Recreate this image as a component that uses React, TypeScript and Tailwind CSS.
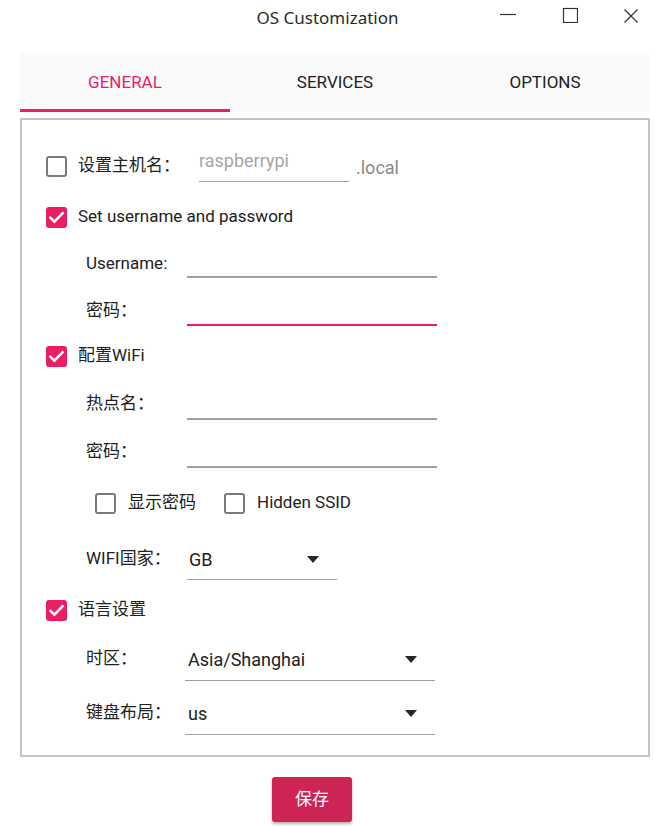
import React from 'react';

function Check({ checked }: { checked: boolean }) {
    if (checked) {
        return (
            <div className="w-[21px] h-[21px] rounded-[3px] bg-[#e91e63] flex items-center justify-center shrink-0">
                <svg width="17" height="17" viewBox="0 0 24 24">
                    <path d="M3.5 12.5l5.5 5.5L20.5 6" fill="none" stroke="white" strokeWidth="3.6" strokeLinecap="square" />
                </svg>
            </div>
        );
    }
    return <div className="w-[21px] h-[21px] rounded-[3px] border-2 border-[#7a7a7a] shrink-0" />;
}

function Arrow() {
    return (
        <svg width="12" height="7" viewBox="0 0 12 7" className="shrink-0">
            <path d="M0 0h12L6 7z" fill="#262626" />
        </svg>
    );
}

function Row({ top, children, className = '' }: { top: number; children: React.ReactNode; className?: string }) {
    return (
        <div className={`flex items-center h-[40px] ${className}`} style={{ marginTop: top }}>
            {children}
        </div>
    );
}

function Field({ h, focused = false }: { h: string; focused?: boolean }) {
    return (
        <div
            className={`self-start ${h} w-[250px] ${focused ? 'border-b-2 border-[#e91e63]' : 'border-b-2 border-[#a0a0a0]'}`}
        />
    );
}

export default function App() {
    return (
        <div
            className="w-[655px] h-[826px] bg-white relative overflow-hidden text-[#212121]"
            style={{ fontFamily: 'Roboto, "Noto Sans CJK SC", sans-serif' }}
        >
            {/* title bar */}
            <div className="h-[35px] flex items-center justify-center relative">
                <div className="text-[17px] text-[#2a2a2a]" style={{ fontFamily: '"Noto Sans", "Noto Sans CJK SC", sans-serif' }}>
                    OS Customization
                </div>
                <svg width="18" height="16" viewBox="0 0 18 16" className="absolute left-[499px] top-[7px]">
                    <path d="M1 7.5h16" stroke="#333" strokeWidth="1.2" />
                </svg>
                <svg width="16" height="16" viewBox="0 0 16 16" className="absolute left-[562px] top-[7px]">
                    <rect x="1.5" y="1.5" width="14" height="14" fill="none" stroke="#333" strokeWidth="1.2" />
                </svg>
                <svg width="16" height="16" viewBox="0 0 16 16" className="absolute left-[623px] top-[8px]">
                    <path d="M1.5 1.5l13 13M14.5 1.5l-13 13" stroke="#333" strokeWidth="1.2" />
                </svg>
            </div>

            {/* tabs */}
            <div className="ml-[20px] mr-[5px] mt-[18px] h-[59px] bg-[#fafafa] flex text-[17px]">
                <div className="flex-1 flex flex-col">
                    <div className="flex-1 flex items-center justify-center text-[#e91e63] pt-[4px]">GENERAL</div>
                    <div className="h-[3px] bg-[#e91e63]" />
                </div>
                <div className="flex-1 flex items-center justify-center pt-[4px] pb-[3px]">SERVICES</div>
                <div className="flex-1 flex items-center justify-center pt-[4px] pb-[3px]">OPTIONS</div>
            </div>

            {/* panel */}
            <div className="ml-[20px] mr-[5px] mt-[6px] h-[639px] border-2 border-[#c4c4c4] pl-[24px] text-[17px]">
                <Row top={26}>
                    <Check checked={false} />
                    <span className="ml-[11px] w-[121px]">设置主机名：</span>
                    <div className="self-start h-[36px] w-[150px] border-b-[1.5px] border-[#a0a0a0] flex items-center pb-[6px]">
                        <span className="text-[#a6a6a6] text-[18px]">raspberrypi</span>
                    </div>
                    <span className="ml-[7px] text-[#8a8a8a] text-[18px] mt-[2px]">.local</span>
                </Row>
                <Row top={11}>
                    <Check checked />
                    <span className="ml-[11px]">Set username and password</span>
                </Row>
                <Row top={7} className="pl-[40px]">
                    <span className="w-[101px]">Username:</span>
                    <Field h="h-[34px]" />
                </Row>
                <Row top={7} className="pl-[40px]">
                    <span className="w-[101px]">密码：</span>
                    <Field h="h-[35px]" focused />
                </Row>
                <Row top={5}>
                    <Check checked />
                    <span className="ml-[11px]">配置WiFi</span>
                </Row>
                <Row top={8} className="pl-[40px]">
                    <span className="w-[101px]">热点名：</span>
                    <Field h="h-[36px]" />
                </Row>
                <Row top={8} className="pl-[40px]">
                    <span className="w-[101px]">密码：</span>
                    <Field h="h-[36px]" />
                </Row>
                <Row top={11} className="pl-[49px]">
                    <Check checked={false} />
                    <span className="ml-[12px] w-[96px]">显示密码</span>
                    <Check checked={false} />
                    <span className="ml-[12px]">Hidden SSID</span>
                </Row>
                <Row top={16} className="pl-[40px]">
                    <span className="w-[101px]">WIFI国家：</span>
                    <div className="self-start h-[41px] w-[150px] border-b-[1.5px] border-[#a0a0a0] flex items-center pl-[2px] pr-[18px] justify-between text-[18px]">
                        <span>GB</span>
                        <Arrow />
                    </div>
                </Row>
                <Row top={11}>
                    <Check checked />
                    <span className="ml-[11px]">语言设置</span>
                </Row>
                <Row top={9} className="pl-[40px]">
                    <span className="w-[99px]">时区：</span>
                    <div className="self-start h-[42px] w-[250px] border-b-[1.5px] border-[#a0a0a0] flex items-center pl-[3px] pr-[18px] justify-between text-[18px]">
                        <span>Asia/Shanghai</span>
                        <Arrow />
                    </div>
                </Row>
                <Row top={14} className="pl-[40px]">
                    <span className="w-[99px]">键盘布局：</span>
                    <div className="self-start h-[42px] w-[250px] border-b-[1.5px] border-[#a0a0a0] flex items-center pl-[3px] pr-[18px] justify-between text-[18px]">
                        <span>us</span>
                        <Arrow />
                    </div>
                </Row>
            </div>

            {/* save */}
            <div className="flex mt-[20px] pl-[272px]">
                <button className="w-[80px] h-[45px] rounded-[3px] bg-[#cd2355] text-white text-[17px] shadow-[0_2px_3px_rgba(0,0,0,0.3)]">
                    保存
                </button>
            </div>
        </div>
    );
}
